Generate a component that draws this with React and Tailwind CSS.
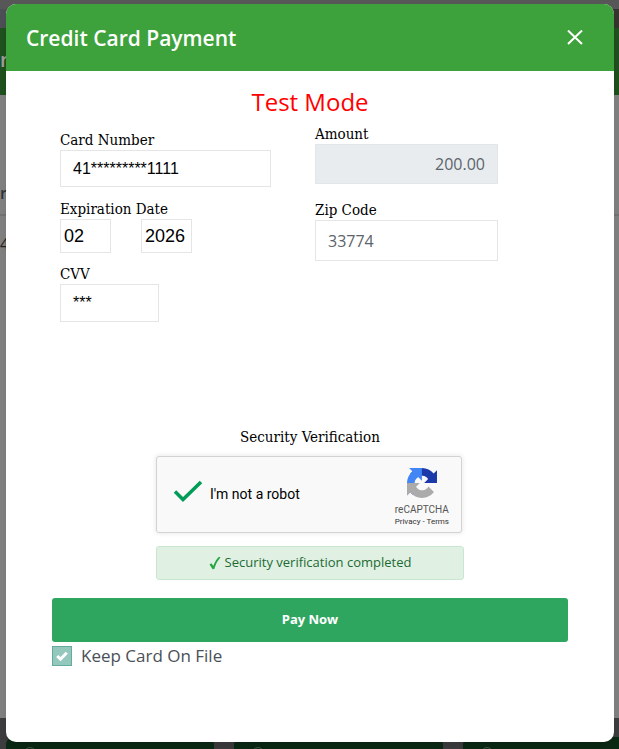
const labelClass = "block font-['DejaVu_Serif_Condensed','DejaVu_Serif',serif] text-[15px] leading-5 text-black";
const fieldClass = "block border border-[#e5e5e5] bg-white outline-none";

const RecaptchaLogo = () => {
    return (
        <svg className="size-[30px]" viewBox="0 0 64 64" aria-hidden="true">
            <path d="M64 31.955l-.033-1.37V4.687l-7.16 7.16C50.948 4.674 42.033.093 32.05.093c-10.4 0-19.622 4.96-25.458 12.64l11.736 11.86a15.55 15.55 0 0 1 4.754-5.334c2.05-1.6 4.952-2.906 8.968-2.906.485 0 .86.057 1.135.163 4.976.393 9.288 3.14 11.828 7.124l-8.307 8.307L64 31.953" fill="#1c3aa9" />
            <path d="M31.862.094l-1.37.033H4.594l7.16 7.16C4.58 13.147 0 22.06 0 32.046c0 10.4 4.96 19.622 12.64 25.458L24.5 45.768a15.55 15.55 0 0 1-5.334-4.754c-1.6-2.05-2.906-4.952-2.906-8.968 0-.485.057-.86.163-1.135.393-4.976 3.14-9.288 7.124-11.828l8.307 8.307L31.86.095" fill="#4285f4" />
            <path d="M.001 32.045l.033 1.37v25.898l7.16-7.16c5.86 7.173 14.774 11.754 24.76 11.754 10.4 0 19.622-4.96 25.458-12.64l-11.736-11.86a15.55 15.55 0 0 1-4.754 5.334c-2.05 1.6-4.952 2.906-8.968 2.906-.485 0-.86-.057-1.135-.163-4.976-.393-9.288-3.14-11.828-7.124l8.307-8.307c-10.522.04-22.4.066-27.295-.005" fill="#ababab" />
        </svg>
    );
};

const FooterTile = () => {
    return (
        <div className="h-10 w-[34%] shrink-0 rounded-lg bg-[#0b2a15] pt-2.5 pl-[18px]">
            <div className="size-3 rounded-full border border-[#45584a]" />
        </div>
    );
};

// dimmed page that shows around the dialog
const PageBehind = () => {
    return (
        <div aria-hidden="true" className="absolute inset-0 flex flex-col overflow-hidden bg-[#828282]">
            <div className="h-[9px] bg-[#575757]" />
            <div className="h-[19px] bg-linear-to-r from-[#4d4f56] to-[#37342f]" />
            <div className="h-[67px] bg-[#20511e] pt-[18px] text-xl font-semibold text-[#a0a0a0]">n</div>
            <div className="h-[121px] border-b-2 border-[#747474] pt-[86px] text-base font-semibold text-[#303438]">r</div>
            <div className="grow pt-4 text-base text-[#222]">40</div>
            <div className="flex h-[31px] gap-5 bg-[#3e3d3f] pt-[19px] pl-1.5">
                <FooterTile />
                <FooterTile />
                <FooterTile />
            </div>
        </div>
    );
};

const CardForm = () => {
    return (
        <div className="grid grid-cols-2">
            <div className="pt-1.5 pl-2">
                <label htmlFor="card" className={labelClass}>Card Number</label>
                <input id="card" type="text" defaultValue="41*********1111" className={`${fieldClass} h-[37px] w-full max-w-[211px] px-3 font-['Liberation_Sans',sans-serif] text-base text-black`} />

                <label htmlFor="month" className={`${labelClass} mt-3`}>Expiration Date</label>
                <div className="flex gap-[30px]">
                    <select id="month" className={`${fieldClass} h-[34px] w-[51px] appearance-none px-[3px] font-['Liberation_Sans',sans-serif] text-lg leading-6 text-black`}>
                        <option>02</option>
                    </select>
                    <select aria-label="Expiration year" className={`${fieldClass} h-[34px] w-[51px] appearance-none px-[3px] font-['Liberation_Sans',sans-serif] text-lg leading-6 text-black`}>
                        <option>2026</option>
                    </select>
                </div>

                <label htmlFor="cvv" className={`${labelClass} mt-[11px]`}>CVV</label>
                <input id="cvv" type="text" defaultValue="***" className={`${fieldClass} h-[38px] w-[99px] px-3 font-['Liberation_Sans',sans-serif] text-base text-black`} />
            </div>

            <div className="pl-[5px]">
                <label htmlFor="amount" className={labelClass}>Amount</label>
                <input id="amount" type="text" readOnly defaultValue="200.00" className="block h-10 w-full max-w-[183px] border border-[#e2e6e9] bg-[#e8ecef] px-3 text-right text-base text-[#5c636a] outline-none" />

                <label htmlFor="zip" className={`${labelClass} mt-4`}>Zip Code</label>
                <input id="zip" type="text" defaultValue="33774" className={`${fieldClass} h-[41px] w-full max-w-[183px] px-3 text-base text-[#5c636a]`} />
            </div>
        </div>
    );
};

const App = () => {
    return (
        <div className="relative flex min-h-screen flex-col pt-1 pr-[5px] pb-[7px] pl-1.5 font-['Open_Sans','Noto_Sans',sans-serif]">
            <PageBehind />

            <div role="dialog" aria-labelledby="title" className="relative flex grow flex-col overflow-hidden rounded-[10px] bg-white shadow-lg">
                <header className="flex h-[67px] items-center justify-between bg-[#3da23b] pr-[27px] pl-5 text-white">
                    <h1 id="title" className="text-[21px] leading-8 font-semibold">Credit Card Payment</h1>
                    <button type="button" aria-label="Close" className="p-1">
                        <svg className="size-4" viewBox="0 0 16 16" fill="none" stroke="currentColor" strokeWidth="2">
                            <path d="M1 0.5L15 14M15 0.5L1 14" />
                        </svg>
                    </button>
                </header>

                <form className="px-[46px] pt-[15px]">
                    <h2 className="text-center text-2xl text-[#ff0000]">Test Mode</h2>
                    <div className="mt-1.5">
                        <CardForm />
                    </div>

                    <p className={`${labelClass} mt-[105px] text-center`}>Security Verification</p>

                    <div className="mx-auto mt-[9px] w-[308px]">
                        <div className="flex h-[77px] w-[306px] items-center justify-between rounded-[3px] border border-[#d3d3d3] bg-[#f9f9f9] pr-3 pl-4 font-[Roboto,sans-serif] shadow-[0_0_4px_1px_rgba(0,0,0,0.08)]">
                            <div className="flex items-center gap-[7px] text-sm text-black">
                                <svg className="mb-1.5 h-6 w-[30px]" viewBox="0 0 30 24" fill="none" stroke="#009c58" strokeWidth="3.5" aria-hidden="true">
                                    <path d="M2 11.5L10 19.5L28 2" />
                                </svg>
                                <span className="pb-0.5">I'm not a robot</span>
                            </div>
                            <div className="flex flex-col items-center pt-1 text-[#555]">
                                <RecaptchaLogo />
                                <div className="mt-1 text-[10px] leading-4">reCAPTCHA</div>
                                <div className="text-[8px] leading-2 text-[#333]">
                                    <a href="#privacy">Privacy</a> - <a href="#terms">Terms</a>
                                </div>
                            </div>
                        </div>

                        <div className="mt-[13px] flex h-[34px] items-center justify-center gap-1 rounded-[3px] border border-[#c9e7d0] bg-[#e0f1e4] text-[13px] text-[#1d6a32]">
                            <svg className="h-3.5 w-3" viewBox="0 0 12 14" fill="#28a745" aria-hidden="true">
                                <path d="M0.5 8.5L2.3 7.2L4.3 9.8C6 5.5 8 2.5 10 0.8L11.5 1.5C8.6 4.5 6.7 8.3 5.3 13L3.6 13.2Z" />
                            </svg>
                            Security verification completed
                        </div>
                    </div>

                    <button type="button" className="mt-[18px] block h-11 w-full rounded-[3px] bg-[#2fa660] text-[13px] font-bold text-white">Pay Now</button>

                    <label className="mt-0.5 flex items-center gap-[9px] text-[17px] leading-6 text-[#4a5057]">
                        <span className="grid size-5 shrink-0">
                            <input type="checkbox" defaultChecked className="col-start-1 row-start-1 size-5 appearance-none border border-[#62ab9d] bg-[#95c8bd]" />
                            <svg className="pointer-events-none col-start-1 row-start-1 m-auto size-3" viewBox="0 0 12 12" fill="none" stroke="white" strokeWidth="3" aria-hidden="true">
                                <path d="M1.2 6L4.5 9.2L10.8 2.8" />
                            </svg>
                        </span>
                        Keep Card On File
                    </label>
                </form>
            </div>
        </div>
    );
};

export default App;
